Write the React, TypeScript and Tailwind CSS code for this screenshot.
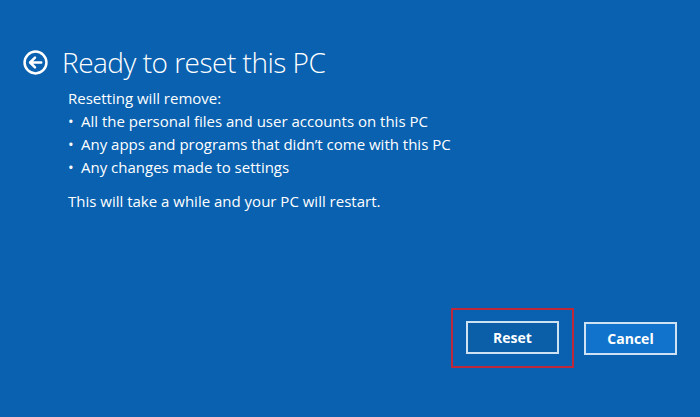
export default function App() {
  const items = [
    "All the personal files and user accounts on this PC",
    "Any apps and programs that didn\u2019t come with this PC",
    "Any changes made to settings",
  ];

  return (
    <div className="w-[700px] h-[417px] bg-[#0a61af] text-white flex flex-col font-['Open_Sans','Noto_Sans',sans-serif] overflow-hidden">
      <div className="flex items-center gap-[14px] pl-[23px] pt-[45px]">
        <svg width="25" height="25" viewBox="0 0 24 24" fill="none" stroke="white" strokeWidth="2.4">
          <circle cx="12" cy="12" r="10.5" />
          <path d="M17.5 12H7M11.5 7.3L6.8 12l4.7 4.7" strokeLinecap="round" strokeLinejoin="round" />
        </svg>
        <h1 className="text-[28px] font-light leading-[34px] tracking-[-0.5px]">Ready to reset this PC</h1>
      </div>

      <div className="pl-[68px] pt-[8px] text-[15px] leading-[23px]">
        <p>Resetting will remove:</p>
        <ul>
          {items.map((t) => (
            <li key={t} className="flex">
              <span className="w-[13px] shrink-0">&bull;</span>
              <span>{t}</span>
            </li>
          ))}
        </ul>
        <p className="mt-[11px]">This will take a while and your PC will restart.</p>
      </div>

      <div className="mt-auto mb-[49px] mr-[23px] flex items-center justify-end gap-[10px]">
        <div className="border-[2px] border-[#c0283a] px-[13px] pt-[11px] pb-[12px]">
          <button className="w-[93px] h-[33px] border-[2px] border-[#cfe2f4] bg-[#0b5fa9] text-[14px] font-bold">
            Reset
          </button>
        </div>
        <button className="w-[93px] h-[33px] border-[2px] border-[#cfe2f4] bg-[#1173cb] text-[14px] font-bold">
          Cancel
        </button>
      </div>
    </div>
  );
}
